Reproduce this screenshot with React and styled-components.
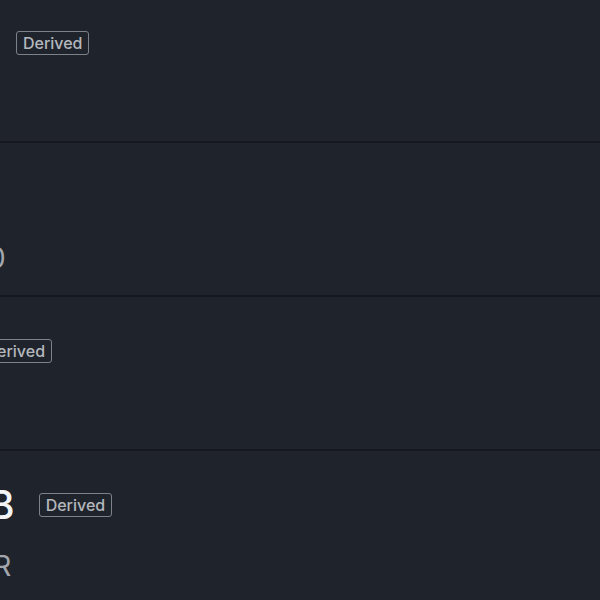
import React from "react";
import styled, { createGlobalStyle } from "styled-components";

const GlobalStyle = createGlobalStyle`
  html, body {
    margin: 0;
    padding: 0;
    background: #1f242c;
    overflow: hidden;
  }
  body {
    font-family: Inter, "Noto Sans", "Liberation Sans", sans-serif;
  }
`;

const Screen = styled.div`
  width: 600px;
  height: 600px;
  overflow: hidden;
  background: #1f242c;
`;

// the list is scrolled sideways: its left column sits past the left edge
const List = styled.ul`
  list-style: none;
  margin: -11px 0 0 -248px;
  padding: 0;
`;

const Row = styled.li`
  height: 154px;
  box-sizing: border-box;
  padding: 30px 0 0 24px;
  border-bottom: 2px solid #15191f;
  display: flex;
  flex-direction: column;
  gap: 20px;
`;

const TitleLine = styled.div`
  display: flex;
  align-items: center;
  gap: 24px;
  height: 48px;
  white-space: nowrap;
`;

const Title = styled.span`
  font-size: 40px;
  line-height: 48px;
  font-weight: 500;
  color: #f3f4f6;
`;

const Badge = styled.span`
  display: inline-flex;
  align-items: center;
  height: 24px;
  box-sizing: border-box;
  padding: 0 6px;
  border: 1.5px solid #7c828a;
  border-radius: 3px;
  font-size: 16px;
  font-weight: 500;
  color: #b4b8bd;
`;

const Subtitle = styled.span`
  font-size: 28px;
  line-height: 34px;
  color: #a3a7ad;
  white-space: nowrap;
`;

const units = [
  { title: "Kilobyte kB", sub: "1,000 bytes", derived: true },
  { title: "Byte B", sub: "8 bits exponent 0", derived: false },
  { title: "Kilobit kb", sub: "1,000 bits · 125 B", derived: true },
  { title: "Gigabyte GB", sub: "1GB · MULTIPLIER", derived: true },
];

export default function App() {
  return (
    <Screen>
      <GlobalStyle />
      <List>
        {units.map((u) => (
          <Row key={u.title}>
            <TitleLine>
              <Title>{u.title}</Title>
              {u.derived && <Badge>Derived</Badge>}
            </TitleLine>
            <Subtitle>{u.sub}</Subtitle>
          </Row>
        ))}
      </List>
    </Screen>
  );
}
